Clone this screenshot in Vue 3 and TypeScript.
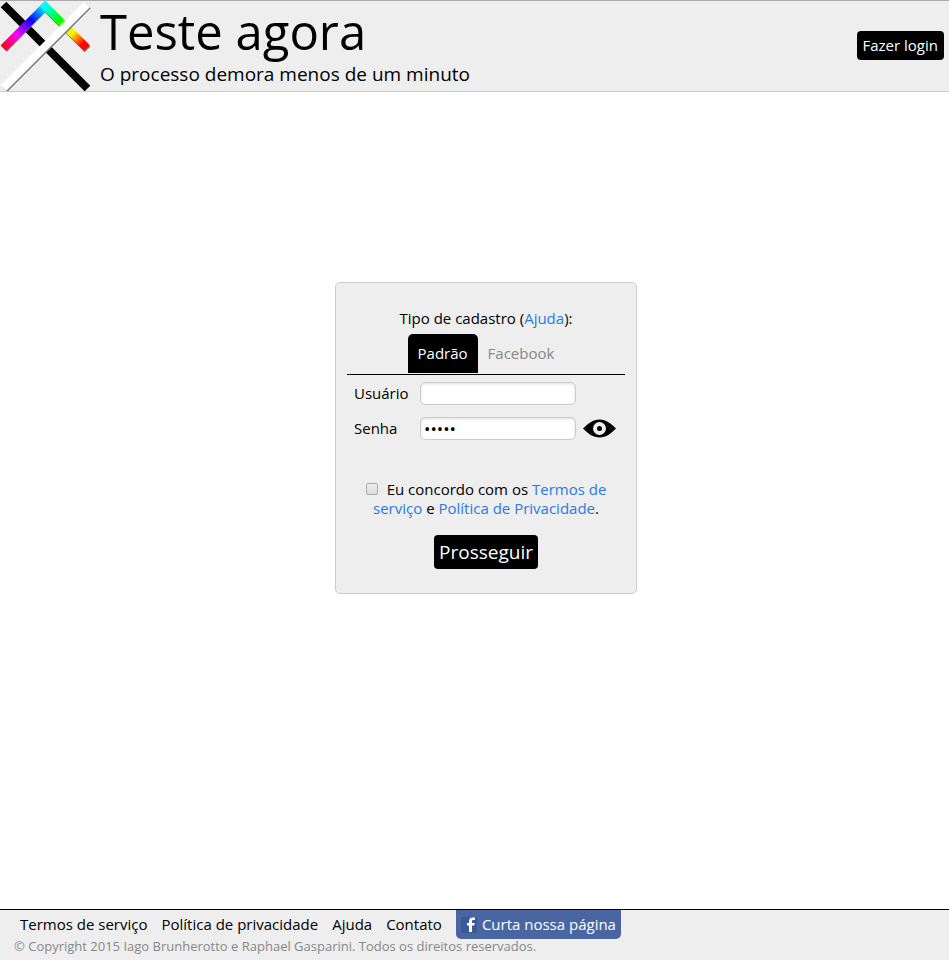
<script setup lang="ts">
import { ref } from 'vue'

type AccountType = 'padrao' | 'facebook'

const accountType = ref<AccountType>('padrao')
const username = ref('')
const password = ref('senha')
const showPassword = ref(false)
const accepted = ref(false)

const footerLinks = ['Termos de serviço', 'Política de privacidade', 'Ajuda', 'Contato']
</script>

<template>
  <div class="page">
    <header class="header">
      <svg class="logo" viewBox="0 0 92 90" aria-hidden="true">
        <defs>
          <linearGradient id="rise" gradientUnits="userSpaceOnUse" x1="3" y1="47" x2="45" y2="5">
            <stop offset="0" stop-color="#ff0010" />
            <stop offset="0.32" stop-color="#ff00ff" />
            <stop offset="0.66" stop-color="#1000ff" />
            <stop offset="1" stop-color="#00ffff" />
          </linearGradient>
          <linearGradient id="fall" gradientUnits="userSpaceOnUse" x1="45" y1="5" x2="87" y2="47">
            <stop offset="0" stop-color="#00ffff" />
            <stop offset="0.34" stop-color="#00ff00" />
            <stop offset="0.64" stop-color="#ffff00" />
            <stop offset="0.9" stop-color="#ff0000" />
          </linearGradient>
        </defs>
        <g fill="none" stroke-width="8">
          <path d="M3.500 3.500L87.500 87.500" stroke="#000" />
          <path d="M4 48L45 6L87.500 48.500" stroke="#777" />
          <path d="M3.500 47L47 3.500" stroke="url(#rise)" />
          <path d="M42.500 2.500L87 47" stroke="url(#fall)" />
          <path d="M4.500 88L88 4.500" stroke="#777" />
          <path d="M3.500 87L87 3.500" stroke="#fff" />
        </g>
      </svg>
      <div class="heading">
        <h1 class="title">Teste agora</h1>
        <p class="subtitle">O processo demora menos de um minuto</p>
      </div>
      <button class="button login" type="button">Fazer login</button>
    </header>

    <main class="main">
      <form class="card" @submit.prevent>
        <p class="kind">Tipo de cadastro (<a class="link" href="#ajuda">Ajuda</a>):</p>
        <div class="tabs">
          <button
            class="tab"
            :class="{ active: accountType === 'padrao' }"
            type="button"
            @click="accountType = 'padrao'"
          >Padrão</button>
          <button
            class="tab"
            :class="{ active: accountType === 'facebook' }"
            type="button"
            @click="accountType = 'facebook'"
          >Facebook</button>
        </div>

        <div class="fields">
          <label for="usuario">Usuário</label>
          <input id="usuario" v-model="username" class="field" type="text" />
          <span></span>
          <label for="senha">Senha</label>
          <input id="senha" v-model="password" class="field" :type="showPassword ? 'text' : 'password'" />
          <button class="reveal" type="button" aria-label="Mostrar senha" @click="showPassword = !showPassword">
            <svg class="eye" viewBox="0 0 34 20" aria-hidden="true">
              <path d="M0 9.500C5 4.500 10 0.500 16.500 0.500S28 4.500 33 9.500C28 14.500 23 18.500 16.500 18.500S5 14.500 0 9.500Z" fill="#000" />
              <circle cx="16.500" cy="9.500" r="4.500" fill="none" stroke="#eee" stroke-width="4" />
            </svg>
          </button>
        </div>

        <p class="terms">
          <input id="aceite" v-model="accepted" class="check" type="checkbox" />
          <label for="aceite">Eu concordo com os </label>
          <a class="link" href="#termos">Termos de serviço</a> e
          <a class="link" href="#privacidade">Política de Privacidade</a>.
        </p>

        <button class="button submit" type="submit">Prosseguir</button>
      </form>
    </main>

    <footer class="footer">
      <nav class="links">
        <a v-for="item in footerLinks" :key="item" class="footer-link" href="#">{{ item }}</a>
        <a class="like" href="#facebook">
          <svg class="fb" viewBox="0 0 16 16" aria-hidden="true">
            <rect width="16" height="16" fill="#3b5998" />
            <path d="M8 15V8.500H6V6H8V4.500C8 2 9.300 0.500 11.500 0.500H14V3H12.500C11.500 3 11 3.400 11 4.500V6H13.700L13.300 8.500H11V15Z" fill="#fff" />
          </svg>
          <span>Curta nossa página</span>
        </a>
      </nav>
      <p class="copyright">© Copyright 2015 Iago Brunherotto e Raphael Gasparini. Todos os direitos reservados.</p>
    </footer>
  </div>
</template>

<style>
body {
  margin: 0;
}
</style>

<style scoped>
.page {
  display: flex;
  flex-direction: column;
  min-height: 100vh;
  background: #fff;
  color: #000;
  font-family: "Open Sans", "Noto Sans", sans-serif;
  font-size: 15px;
  line-height: 19px;
}

button,
input {
  margin: 0;
  font: inherit;
}

button {
  cursor: pointer;
}

h1,
p {
  margin: 0;
  font-weight: 400;
}

a {
  text-decoration: none;
}

.header {
  display: flex;
  align-items: center;
  border-top: 1px solid #aaa;
  border-bottom: 1px solid #ccc;
  background: #eee;
  padding-right: 5px;
}

.logo {
  display: block;
  width: 92px;
  height: 90px;
}

.heading {
  flex: 1;
  padding: 0 0 4px 8px;
}

.title {
  font-size: 49px;
  line-height: 60px;
}

.subtitle {
  font-size: 19px;
  line-height: 26px;
}

.button {
  border: 0;
  border-radius: 4px;
  background: #000;
  color: #fff;
  white-space: nowrap;
}

.login {
  margin-bottom: 2px;
  padding: 5px 6px;
}

.main {
  display: flex;
  flex: 1;
  align-items: center;
  justify-content: center;
  padding: 0 0 125px 23px;
}

.card {
  box-sizing: border-box;
  width: 302px;
  padding: 26px 11px 24px;
  border: 1px solid #ccc;
  border-radius: 5px;
  background: #eee;
  text-align: center;
}

.link {
  color: #2a7ae2;
}

.tabs {
  display: flex;
  justify-content: center;
  margin-top: 6px;
  padding-bottom: 1px;
  border-bottom: 1px solid #000;
}

.tab {
  padding: 10px;
  border: 0;
  border-radius: 5px 5px 0 0;
  background: none;
  color: #888;
}

.tab.active {
  background: #000;
  color: #fff;
}

.fields {
  display: grid;
  grid-template-columns: 59px 156px 34px;
  align-items: center;
  gap: 12px 7px;
  margin-top: 7px;
  padding-left: 7px;
  text-align: left;
}

.field {
  box-sizing: border-box;
  width: 156px;
  height: 23px;
  padding: 0 3px;
  border: 1px solid #ccc;
  border-radius: 5px;
  background: #fff;
  box-shadow: inset 0 1px 3px #ddd;
  font-size: 17px;
}

.reveal {
  padding: 0;
  border: 0;
  background: none;
}

.eye {
  display: block;
  width: 34px;
  height: 20px;
}

.terms {
  margin-top: 40px;
  padding: 0 10px;
}

.check {
  appearance: none;
  width: 12px;
  height: 12px;
  margin-right: 5px;
  border: 1px solid #aaa;
  border-radius: 2px;
  background: linear-gradient(#eee, #ddd);
}

.terms label {
  padding-left: 4px;
}

.check:checked {
  background: #444;
}

.submit {
  margin-top: 17px;
  padding: 5px;
  font-size: 19px;
  line-height: 24px;
}

.footer {
  border-top: 1px solid #000;
  background: #eee;
}

.links {
  display: flex;
  flex-wrap: wrap;
  gap: 0 14px;
  padding-left: 20px;
}

.footer-link {
  padding: 5px 0;
  color: #000;
}

.like {
  display: flex;
  align-items: center;
  gap: 5px;
  padding: 5px;
  border-radius: 0 0 5px 5px;
  background: #4966a3;
  color: #fff;
}

.fb {
  width: 16px;
  height: 16px;
}

.copyright {
  padding: 0 14px 7px;
  color: #888;
  font-size: 13px;
  line-height: 14px;
}
</style>
